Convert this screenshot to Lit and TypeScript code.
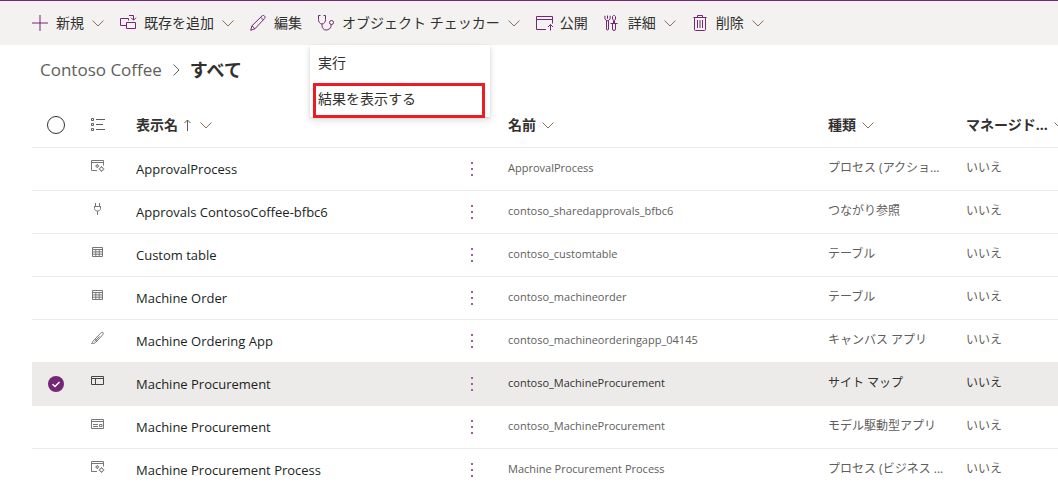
import { LitElement, html, css, svg, nothing } from "lit";
import type { TemplateResult, SVGTemplateResult } from "lit";
import { customElement, state } from "lit/decorators.js";
import { classMap } from "lit/directives/class-map.js";

const glyphs: Record<string, SVGTemplateResult> = {
  add: svg`<path d="M8 0v16M0 8h16"/>`,
  addExisting: svg`<path d="M6.500 10.500h-6v-7h8v2M9 .5h4.500v4.500M11 2.700l2.500 2.500L16 2.700M6.500 7.500h9v6h-9z"/>`,
  edit: svg`<path d="M.7 15.300l1.300-4.500L12 .9c.8-.7 1.800-.6 2.500.1s.8 1.700.1 2.500L4.900 13.800zM2 10.800l2.900 3M10.700 2.200l2.900 2.900"/>`,
  checker: svg`<path d="M2.500 .5h-2v4c0 2.500 1.500 4.500 3.500 4.500s3.500-2 3.500-4.500v-4h-2M4 9v1.500c0 2.500 1.500 4.500 4 4.500s4.500-1.500 5-3.500V9.500"/><circle cx="13.500" cy="7.500" r="2"/>`,
  publish: svg`<path d="M10 14.500H.5v-13h16v7M.5 4.500h16M14.500 15.500V9.500M12 12l2.500-2.500L17 12"/>`,
  advanced: svg`<path d="M2.500 5.500v8.500a1 1 0 0 0 2 0V5.500M.9 .8v3l1.600 1.900h2l1.600-1.900v-3M3.500 .5v3.300M8.500 1.500l1-1h1l1 1v2.500l-1 1.500v3h-1v-3l-1-1.500zM6.500 8.500h7M8.500 8.500v5.500a1 1 0 0 0 3 0V8.500"/>`,
  remove: svg`<path d="M1.500 2.500h13M5.500 2.500v-2h5v2M2.500 2.500v12a1 1 0 0 0 1 1h9a1 1 0 0 0 1-1v-12M5.500 5v8M8 5v8M10.500 5v8"/>`,
  list: svg`<path d="M6 2.500h9M6 7.500h7M6 12.500h9M6.500 13M1.500 1.500h2v2h-2zM1.500 6.500h2v2h-2zM1.500 11.500h2v2h-2z"/>`,
  process: svg`<path d="M7 12.500H1.500v-10h12v5M1.500 4.500h12"/><circle cx="7.300" cy="8" r="1.100"/><path d="M7.300 6v1M7.300 9v1M5.300 8h1M8.300 8h1"/><circle cx="11.500" cy="11" r="1.800"/><path d="M11.500 8.200v1M11.500 12.800v1M8.700 11h1M13.300 11h1"/>`,
  plug: svg`<path d="M5.500 2v3M9.500 2v3M4 5.500h7M4.500 5.500v2c0 1.500 1 2.500 3 2.500s3-1 3-2.500v-2M7.500 10v4"/>`,
  table: svg`<path d="M2.500 3.500h10v9h-10zM2.500 5.500h10M2.500 7.900h10M2.500 10.200h10M5.800 5.500v7M9.200 5.500v7"/>`,
  brush: svg`<path d="M1.500 13.500c1.200-.5 1-2 2-3L10.700 3.200c.8-.8 1.900-1.100 2.400-.6s.2 1.600-.6 2.400L5.800 12.200c-1.200 1.400-2.800 1.400-4.300 1.300zM4.800 9.200l2 2M4.500 11.500l5-5"/>`,
  sitemap: svg`<path d="M1.500 3.500h12v8h-12zM1.500 5.500h12M5.500 5.500v6"/>`,
  modelApp: svg`<path d="M1.500 3.500h12v9h-12zM1.500 5.500h12M3 8.500h5M3 10.500h5M9.500 8.500h2.500v2h-2.500z"/>`,
  ascending: svg`<path d="M7.500 14V3M4.500 6l3-3 3 3"/>`,
};

const icon = (name: string, tone = "") =>
  html`<svg class="icon ${tone}" viewBox="0 0 16 16" aria-hidden="true">${glyphs[name]}</svg>`;

const chevron = () =>
  html`<svg class="chevron" viewBox="0 0 12 12" aria-hidden="true"><path d="M.5 3.500L6 9l5.500-5.500"/></svg>`;

interface Command {
  icon: string;
  label: string;
  split?: boolean;
  menu?: string[];
}

interface Row {
  icon: string;
  title: string;
  name: string;
  kind: string;
  managed: string;
}

const commands: Command[] = [
  { icon: "add", label: "新規", split: true },
  { icon: "addExisting", label: "既存を追加", split: true },
  { icon: "edit", label: "編集" },
  { icon: "checker", label: "オブジェクト チェッカー", split: true, menu: ["実行", "結果を表示する"] },
  { icon: "publish", label: "公開" },
  { icon: "advanced", label: "詳細", split: true },
  { icon: "remove", label: "削除", split: true },
];

const rows: Row[] = [
  { icon: "process", title: "ApprovalProcess", name: "ApprovalProcess", kind: "プロセス (アクショ...", managed: "いいえ" },
  { icon: "plug", title: "Approvals ContosoCoffee-bfbc6", name: "contoso_sharedapprovals_bfbc6", kind: "つながり参照", managed: "いいえ" },
  { icon: "table", title: "Custom table", name: "contoso_customtable", kind: "テーブル", managed: "いいえ" },
  { icon: "table", title: "Machine Order", name: "contoso_machineorder", kind: "テーブル", managed: "いいえ" },
  { icon: "brush", title: "Machine Ordering App", name: "contoso_machineorderingapp_04145", kind: "キャンバス アプリ", managed: "いいえ" },
  { icon: "sitemap", title: "Machine Procurement", name: "contoso_MachineProcurement", kind: "サイト マップ", managed: "いいえ" },
  { icon: "modelApp", title: "Machine Procurement", name: "contoso_MachineProcurement", kind: "モデル駆動型アプリ", managed: "いいえ" },
  { icon: "process", title: "Machine Procurement Process", name: "Machine Procurement Process", kind: "プロセス (ビジネス ...", managed: "いいえ" },
];

@customElement("app-root")
export class AppRoot extends LitElement {
  @state() private selected = 5;

  static styles = css`
    :host {
      display: block;
      height: 100vh;
      overflow: hidden;
      background: #fff;
      color: #323130;
      font-family: "Open Sans", "Noto Sans CJK JP", sans-serif;
      font-size: 14px;
      line-height: 20px;
    }
    * { box-sizing: border-box; }
    button {
      border: 0;
      padding: 0;
      background: none;
      color: inherit;
      font: inherit;
      white-space: nowrap;
      cursor: pointer;
    }
    .icon {
      width: 16px;
      height: 16px;
      flex: none;
      display: block;
      overflow: visible;
      fill: none;
      stroke: #797775;
    }
    .brand { stroke: #742774; }
    .dark { stroke: #484644; }
    .chevron {
      width: 12px;
      height: 12px;
      flex: none;
      fill: none;
      stroke: #8a6d5a;
    }
    .toolbar {
      display: flex;
      height: 45px;
      padding-left: 24px;
      border-top: 1px solid #742774;
      background: #f3f2f1;
    }
    .slot { position: relative; display: flex; }
    .command {
      display: flex;
      align-items: center;
      gap: 8px;
      padding: 0 8px;
    }
    .menu {
      position: absolute;
      z-index: 1;
      top: 100%;
      left: 0;
      width: 180px;
      background: #fff;
      box-shadow: 0 3px 7px rgba(0, 0, 0, 0.14), 0 1px 2px rgba(0, 0, 0, 0.1);
    }
    .menu-item {
      display: block;
      position: relative;
      width: 100%;
      height: 36px;
      padding: 0 8px;
      text-align: left;
    }
    .marked::after {
      content: "";
      position: absolute;
      inset: 2px 5px -1px 3px;
      border: 3px solid #ed1c24;
    }
    .crumbs {
      display: flex;
      align-items: center;
      gap: 8px;
      height: 58px;
      padding: 0 40px 8px;
      line-height: 24px;
    }
    .crumbs a { color: #605e5c; font-size: 17px; text-decoration: none; }
    .crumbs h1 { margin: 0; font-size: 18px; font-weight: 700; }
    .crumbs .chevron { transform: rotate(-90deg); stroke: #605e5c; }
    .grid { padding-left: 32px; overflow: hidden; }
    table {
      width: 100%;
      table-layout: fixed;
      border-collapse: separate;
      border-spacing: 0;
    }
    .col-check { width: 48px; }
    .col-icon { width: 44px; }
    .col-name { width: 320px; }
    .col-kind { width: 138px; }
    .col-managed { width: 104px; }
    th, td {
      padding: 0 12px;
      border-bottom: 1px solid #edebe9;
      text-align: left;
      white-space: nowrap;
    }
    th { height: 45px; font-weight: 700; }
    td {
      height: 43px;
      padding-top: 12px;
      vertical-align: top;
      color: #605e5c;
      font-size: 12px;
      line-height: 16px;
    }
    .schema { font-size: 11px; }
    .sort {
      display: flex;
      align-items: center;
      gap: 6px;
    }
    .sort .icon { margin: 0 -2px 0 -4px; }
    .check { padding: 0 16px; vertical-align: middle; }
    .check input {
      display: block;
      width: 16px;
      height: 16px;
      margin: 0;
      appearance: none;
      border-radius: 50%;
      opacity: 0;
    }
    .check input.all {
      width: 18px;
      height: 18px;
      margin: 0 -1px;
      border: 1px solid #323130;
      opacity: 1;
    }
    .check input:checked {
      opacity: 1;
      background: #742774;
    }
    .check label { position: relative; display: block; }
    .tick {
      position: absolute;
      inset: 0;
      stroke: #fff;
      pointer-events: none;
    }
    .kind-icon { padding: 0 0 0 10px; }
    td.kind-icon { padding-top: 10px; }
    th .icon { stroke: #605e5c; }
    .lead { padding-top: 11px; }
    .title {
      display: flex;
      justify-content: space-between;
      color: #201f1e;
      font-size: 13px;
      line-height: 20px;
    }
    .more {
      width: 24px;
      height: 20px;
      display: grid;
      place-items: center;
    }
    .dots { width: 2px; height: 14px; fill: #9b5f9b; display: block; }
    .chosen td { background: #edebe9; color: #323130; }
  `;

  private command(c: Command): TemplateResult {
    return html`<div class="slot">
      <button class="command" aria-haspopup=${c.split ? "menu" : nothing}>
        ${icon(c.icon, "brand")}<span>${c.label}</span>${c.split ? chevron() : nothing}
      </button>
      ${c.menu
        ? html`<div class="menu" role="menu">
            ${c.menu.map(
              (m, i) => html`<button role="menuitem" class=${classMap({ "menu-item": true, marked: i === 1 })}>${m}</button>`
            )}
          </div>`
        : nothing}
    </div>`;
  }

  private row(r: Row, i: number): TemplateResult {
    const on = i === this.selected;
    return html`<tr class=${classMap({ chosen: on })}>
      <td class="check">
        <label>
          <input type="checkbox" aria-label=${r.title} .checked=${on} @change=${() => (this.selected = on ? -1 : i)} />
          ${on ? html`<svg class="icon tick" viewBox="0 0 16 16" aria-hidden="true"><path stroke-width="1.500" d="M4.500 8.300L7 10.500l4.500-4.500"/></svg>` : nothing}
        </label>
      </td>
      <td class="kind-icon">${icon(r.icon, on ? "dark" : "")}</td>
      <td class="lead">
        <div class="title">
          <span>${r.title}</span>
          <button class="more" aria-label="その他のコマンド">
            <svg class="dots" viewBox="0 0 2 14"><path d="M0 0h2v2H0zM0 6h2v2H0zM0 12h2v2H0z"/></svg>
          </button>
        </div>
      </td>
      <td class="schema">${r.name}</td>
      <td>${r.kind}</td>
      <td>${r.managed}</td>
    </tr>`;
  }

  render() {
    return html`
      <div class="toolbar" role="toolbar">${commands.map((c) => this.command(c))}</div>
      <nav class="crumbs">
        <a href="#">Contoso Coffee</a>${chevron()}
        <h1>すべて</h1>
      </nav>
      <main class="grid">
        <table>
          <colgroup>
            <col class="col-check" /><col class="col-icon" /><col />
            <col class="col-name" /><col class="col-kind" /><col class="col-managed" />
          </colgroup>
          <thead>
            <tr>
              <th class="check"><input class="all" type="checkbox" aria-label="すべて選択" /></th>
              <th class="kind-icon">${icon("list")}</th>
              <th><button class="sort">表示名 ${icon("ascending")} ${chevron()}</button></th>
              <th><button class="sort">名前 ${chevron()}</button></th>
              <th><button class="sort">種類 ${chevron()}</button></th>
              <th><button class="sort">マネージド... ${chevron()}</button></th>
            </tr>
          </thead>
          <tbody>
            ${rows.map((r, i) => this.row(r, i))}
          </tbody>
        </table>
      </main>
    `;
  }
}
